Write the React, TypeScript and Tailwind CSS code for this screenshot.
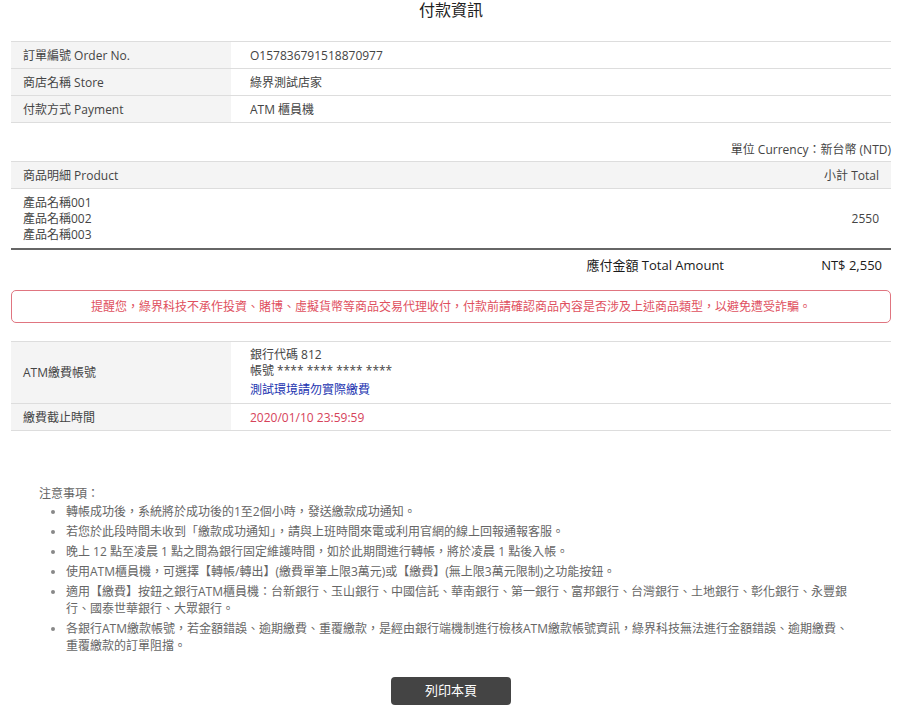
const font = "font-['Open_Sans','Noto_Sans_CJK_TC',sans-serif]";

const orderRows = [
  { label: "訂單編號 Order No.", value: "O157836791518870977" },
  { label: "商店名稱 Store", value: "綠界測試店家" },
  { label: "付款方式 Payment", value: "ATM 櫃員機" },
];

const notes = [
  "轉帳成功後，系統將於成功後的1至2個小時，發送繳款成功通知。",
  "若您於此段時間未收到「繳款成功通知」，請與上班時間來電或利用官網的線上回報通報客服。",
  "晚上 12 點至凌晨 1 點之間為銀行固定維護時間，如於此期間進行轉帳，將於凌晨 1 點後入帳。",
  "使用ATM櫃員機，可選擇【轉帳/轉出】(繳費單筆上限3萬元)或【繳費】(無上限3萬元限制)之功能按鈕。",
  "適用【繳費】按鈕之銀行ATM櫃員機：台新銀行、玉山銀行、中國信託、華南銀行、第一銀行、富邦銀行、台灣銀行、土地銀行、彰化銀行、永豐銀行、國泰世華銀行、大眾銀行。",
  "各銀行ATM繳款帳號，若金額錯誤、逾期繳費、重覆繳款，是經由銀行端機制進行檢核ATM繳款帳號資訊，綠界科技無法進行金額錯誤、逾期繳費、重覆繳款的訂單阻擋。",
];

export default function App() {
  return (
    <div className={`${font} bg-white min-h-[723px] text-[12px] text-[#444]`}>
      <div className="ml-[11px] w-[880px]">
        <h1 className="h-[20px] text-center text-[16px] leading-[20px] text-[#222]">付款資訊</h1>

        {/* order info */}
        <div className="mt-[21px] border-t border-[#ddd]">
          {orderRows.map((r) => (
            <div key={r.label} className="flex h-[27px] items-center border-b border-[#ddd]">
              <div className="flex h-full w-[220px] items-center bg-[#f4f4f4] pl-[12px] pt-[1px]">{r.label}</div>
              <div className="pl-[19px] pt-[1px]">{r.value}</div>
            </div>
          ))}
        </div>

        <div className="mt-[19px] h-[16px] text-right leading-[16px]">單位 Currency：新台幣 (NTD)</div>

        {/* products */}
        <div className="mt-[3px] border-t border-[#ddd]">
          <div className="flex h-[27px] items-center justify-between border-b border-[#ddd] bg-[#f4f4f4] px-[12px] pt-[1px]">
            <span>商品明細 Product</span>
            <span>小計 Total</span>
          </div>
          <div className="flex items-center justify-between border-b-2 border-[#666] px-[12px] pb-[5px] pt-[6px] leading-[16px]">
            <div>
              <div>產品名稱001</div>
              <div>產品名稱002</div>
              <div>產品名稱003</div>
            </div>
            <div>2550</div>
          </div>
          <div className="flex h-[30px] items-center justify-end pt-[1px] text-[13px] text-[#1a1a1a]">
            <span className="pr-[9px]">應付金額 Total Amount</span>
            <span className="w-[158px] pr-[9px] text-right">NT$ 2,550</span>
          </div>
        </div>

        <div className="mt-[10px] flex h-[33px] items-center justify-center rounded-[5px] border border-[#e07580] pt-[1px] text-[#e0505e]">
          提醒您，綠界科技不承作投資、賭博、虛擬貨幣等商品交易代理收付，付款前請確認商品內容是否涉及上述商品類型，以避免遭受詐騙。
        </div>

        {/* ATM info */}
        <div className="mt-[18px] border-t border-[#ddd]">
          <div className="flex h-[62px] border-b border-[#ddd]">
            <div className="flex w-[220px] items-center bg-[#f4f4f4] pl-[12px]">ATM繳費帳號</div>
            <div className="pl-[19px] pt-[5px] leading-[16px]">
              <div>銀行代碼 812</div>
              <div>帳號 **** **** **** ****</div>
              <div className="mt-[3px] text-[#2233b0]">測試環境請勿實際繳費</div>
            </div>
          </div>
          <div className="flex h-[27px] border-b border-[#ddd]">
            <div className="flex w-[220px] items-center bg-[#f4f4f4] pl-[12px] pt-[1px]">繳費截止時間</div>
            <div className="flex items-center pl-[19px] pt-[1px] text-[#d6435a]">2020/01/10 23:59:59</div>
          </div>
        </div>

        {/* notes */}
        <div className="ml-[28px] mt-[54px] w-[811px] text-[#666]">
          <div className="leading-[17px]">注意事項：</div>
          <ul className="mt-[1px] list-disc pl-[27px] marker:text-[#888]">
            {notes.map((n) => (
              <li key={n} className="mb-[3px] leading-[17px]">{n}</li>
            ))}
          </ul>
        </div>

        <button className="mx-auto mt-[23px] block h-[28px] w-[120px] rounded-[4px] bg-[#444] text-[13px] text-white">
          列印本頁
        </button>
      </div>
    </div>
  );
}
